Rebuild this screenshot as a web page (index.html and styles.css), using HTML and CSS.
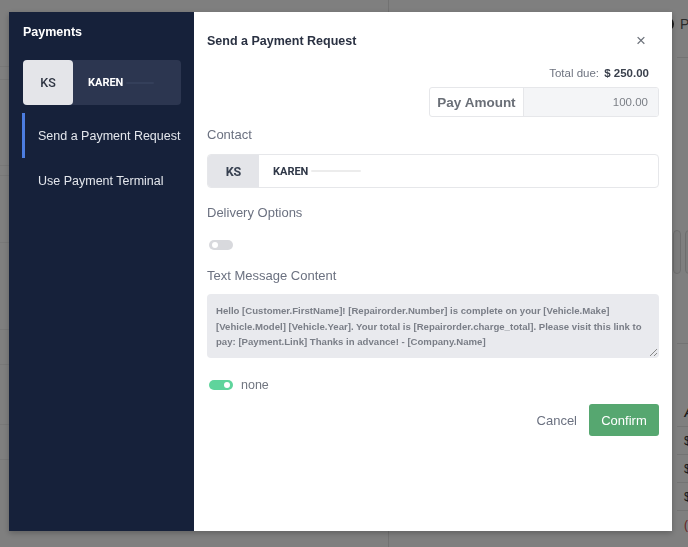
FILE: index.html
```html
<!DOCTYPE html>
<html lang="en">
<head>
    <meta charset="UTF-8">
    <meta name="viewport" content="width=device-width, initial-scale=1.0">
    <title>Send a Payment Request</title>
    <link rel="stylesheet" href="styles.css">
</head>
<body>
    <!-- page behind the modal -->
    <div class="page">
        <div class="page-left">
            <div class="row" style="height: 67px"></div>
            <div class="row" style="height: 13px"></div>
            <div class="row" style="height: 86px"></div>
            <div class="row" style="height: 10px"></div>
            <div class="row" style="height: 67px"></div>
            <div class="row" style="height: 87px"></div>
            <div class="row" style="height: 35px"></div>
            <div class="row" style="height: 60px"></div>
            <div class="row" style="height: 35px"></div>
        </div>
        <div class="page-right">
            <div class="right-head"><span class="circle-ico"></span>P</div>
            <div class="right-cards">
                <div class="mini-card"></div>
                <div class="mini-card"></div>
            </div>
            <div class="right-gap"></div>
            <div class="right-table">
                <div class="t-row t-head">A</div>
                <div class="t-row">$</div>
                <div class="t-row">$</div>
                <div class="t-row">$</div>
                <div class="t-row t-red">(</div>
            </div>
        </div>
    </div>

    <div class="overlay">
        <div class="modal">
            <aside class="sidebar">
                <h3 class="side-title">Payments</h3>
                <div class="side-contact">
                    <div class="initials">KS</div>
                    <div class="side-name">KAREN <span class="redact light"></span></div>
                </div>
                <nav class="side-nav">
                    <div class="nav-item active">Send a Payment Request</div>
                    <div class="nav-item">Use Payment Terminal</div>
                </nav>
            </aside>

            <main class="content">
                <div class="header">
                    <h2>Send a Payment Request</h2>
                    <span class="close">&times;</span>
                </div>

                <div class="total">Total due: <b>$ 250.00</b></div>

                <div class="pay-row">
                    <div class="pay-group">
                        <div class="pay-label">Pay Amount</div>
                        <div class="pay-input">100.00</div>
                    </div>
                </div>

                <div class="field-label contact-label">Contact</div>
                <div class="contact-box">
                    <div class="initials">KS</div>
                    <div class="contact-name">KAREN <span class="redact"></span></div>
                </div>

                <div class="field-label delivery-label">Delivery Options</div>
                <div class="toggle off"></div>

                <div class="field-label message-label">Text Message Content</div>
                <div class="message">Hello [Customer.FirstName]! [Repairorder.Number] is complete on your [Vehicle.Make] [Vehicle.Model] [Vehicle.Year]. Your total is [Repairorder.charge_total]. Please visit this link to pay: [Payment.Link] Thanks in advance! - [Company.Name]<span class="grip"></span></div>

                <div class="switch-row">
                    <div class="toggle on"></div>
                    <span>none</span>
                </div>

                <div class="actions">
                    <span class="cancel">Cancel</span>
                    <button class="confirm">Confirm</button>
                </div>
            </main>
        </div>
    </div>
</body>
</html>
```

FILE: styles.css
```css
* {
    margin: 0;
    padding: 0;
    box-sizing: border-box;
}

body {
    font-family: 'Liberation Sans', Arial, sans-serif;
    background: #ffffff;
    width: 688px;
    height: 547px;
    overflow: hidden;
}

/* background page */
.page {
    display: grid;
    grid-template-columns: 388px 1fr;
    height: 547px;
}

.page-left .row {
    border-bottom: 1px solid #f1f1f1;
}

.page-right {
    border-left: 1px solid #e4e4e4;
    padding-left: 288px;
}

.right-head {
    height: 58px;
    padding-top: 17px;
    border-bottom: 1px solid #e6e6e6;
    font-size: 14px;
    line-height: 14px;
    color: #555;
    display: flex;
    gap: 6px;
}

.circle-ico {
    width: 14px;
    height: 14px;
    border: 2px solid #333;
    border-radius: 50%;
    margin-left: -17px;
}

.right-cards {
    display: flex;
    gap: 4px;
    margin-top: 172px;
    margin-left: -4px;
}

.mini-card {
    width: 8px;
    height: 44px;
    border: 1px solid #dcdcdc;
    border-radius: 4px;
    background: #f7f7f7;
}

.right-gap {
    height: 70px;
    border-bottom: 1px solid #e6e6e6;
}

.right-table {
    margin-top: 55px;
}

.t-row {
    height: 28px;
    padding-left: 7px;
    font-size: 12px;
    line-height: 28px;
    color: #333;
    border-bottom: 1px solid #e6e6e6;
}

.t-head {
    font-weight: bold;
    font-style: italic;
}

.t-red {
    color: #c44;
    border-bottom: none;
}

/* overlay + modal */
.overlay {
    position: fixed;
    inset: 0;
    background: rgba(0, 0, 0, 0.5);
    padding: 12px 0 0 9px;
}

.modal {
    width: 663px;
    height: 519px;
    display: flex;
    background: #fff;
    box-shadow: 0 2px 6px rgba(0, 0, 0, 0.25);
}

.sidebar {
    width: 185px;
    background: #16213a;
    padding: 12px 13px 0 14px;
}

.side-title {
    color: #fff;
    font-size: 12.5px;
    line-height: 16px;
    font-weight: bold;
}

.side-contact {
    margin-top: 20px;
    height: 45px;
    display: flex;
    background: #2c3650;
    border-radius: 4px;
}

.initials {
    font-family: Roboto, sans-serif;
    font-size: 12.5px;
    font-weight: 500;
    color: #2e3442;
    background: #e4e5e9;
    display: flex;
    align-items: center;
    justify-content: center;
}

.side-contact .initials {
    width: 50px;
    border-radius: 4px;
}

.side-name {
    font-family: Roboto, sans-serif;
    font-size: 11px;
    font-weight: bold;
    color: #fff;
    margin-left: 15px;
    display: flex;
    align-items: center;
    gap: 3px;
}

.redact {
    display: inline-block;
    width: 50px;
    height: 2px;
    background: #ececec;
    border-radius: 1px;
}

.redact.light {
    width: 28px;
    background: #343f5a;
}

.side-nav {
    margin-top: 8px;
    margin-left: -1px;
    margin-right: -13px;
}

.nav-item {
    height: 45px;
    padding-left: 13px;
    display: flex;
    align-items: center;
    font-size: 12.5px;
    color: #e3e6ec;
    white-space: nowrap;
    border-left: 3px solid transparent;
}

.nav-item.active {
    border-left-color: #4c7de0;
}

.content {
    flex: 1;
    padding: 21px 13px 0 13px;
    color: #6b7079;
}

.header {
    display: flex;
    justify-content: space-between;
    align-items: center;
    height: 16px;
}

.header h2 {
    font-size: 12.5px;
    color: #2a3142;
}

.close {
    font-size: 17px;
    color: #6e737c;
    margin-right: 13px;
}

.total {
    margin-top: 17px;
    text-align: right;
    padding-right: 10px;
    font-size: 11.5px;
    line-height: 14px;
    color: #6f7480;
}

.total b {
    color: #3a404c;
    margin-left: 2px;
}

.pay-row {
    margin-top: 7px;
    display: flex;
    justify-content: flex-end;
}

.pay-group {
    width: 230px;
    height: 30px;
    display: flex;
    border: 1px solid #e6e7ea;
    border-radius: 3px;
    overflow: hidden;
}

.pay-label {
    width: 94px;
    font-size: 13.5px;
    font-weight: bold;
    color: #6a6f77;
    display: flex;
    align-items: center;
    justify-content: center;
    border-right: 1px solid #e6e7ea;
}

.pay-input {
    flex: 1;
    background: #f4f5f7;
    font-size: 11.5px;
    color: #7b7f86;
    display: flex;
    align-items: center;
    justify-content: flex-end;
    padding-right: 10px;
}

.field-label {
    font-size: 13px;
    line-height: 16px;
    color: #6b7180;
}

.contact-label { margin-top: 10px; }
.delivery-label { margin-top: 17px; }
.message-label { margin-top: 18px; }

.contact-box {
    margin-top: 11px;
    height: 34px;
    display: flex;
    border: 1px solid #e6e7ea;
    border-radius: 4px;
    overflow: hidden;
}

.contact-box .initials {
    width: 51px;
    color: #374050;
    font-weight: bold;
}

.contact-name {
    font-family: Roboto, sans-serif;
    font-size: 11px;
    font-weight: bold;
    color: #2f3747;
    margin-left: 14px;
    display: flex;
    align-items: center;
    gap: 3px;
}

.toggle {
    width: 24px;
    height: 10px;
    border-radius: 5px;
    position: relative;
    margin-left: 2px;
}

.toggle::after {
    content: '';
    position: absolute;
    top: 2px;
    width: 6px;
    height: 6px;
    border-radius: 50%;
    background: #fff;
}

.toggle.off {
    margin-top: 19px;
    background: #d8d9dd;
}

.toggle.off::after { left: 3px; }

.toggle.on {
    background: #5fd49c;
}

.toggle.on::after { right: 3px; }

.message {
    margin-top: 10px;
    height: 64px;
    background: #e9eaee;
    border-radius: 4px;
    padding: 9px 14px 0 9px;
    font-size: 9.6px;
    font-weight: bold;
    line-height: 15.5px;
    color: #7a7e87;
    position: relative;
}

.grip {
    position: absolute;
    right: 2px;
    bottom: 2px;
    width: 7px;
    height: 7px;
    background: linear-gradient(135deg, transparent 45%, #888 45%, #888 55%, transparent 55%, transparent 75%, #888 75%, #888 85%, transparent 85%);
}

.switch-row {
    margin-top: 22px;
    display: flex;
    align-items: center;
    gap: 8px;
    height: 10px;
    font-size: 12.5px;
    color: #717680;
}

.actions {
    margin-top: 14px;
    display: flex;
    justify-content: flex-end;
    align-items: center;
    gap: 12px;
}

.cancel {
    font-size: 13px;
    color: #6b7180;
}

.confirm {
    width: 70px;
    height: 32px;
    border: none;
    border-radius: 3px;
    background: #56a770;
    color: #fff;
    font-family: 'Liberation Sans', Arial, sans-serif;
    font-size: 13px;
}
```
